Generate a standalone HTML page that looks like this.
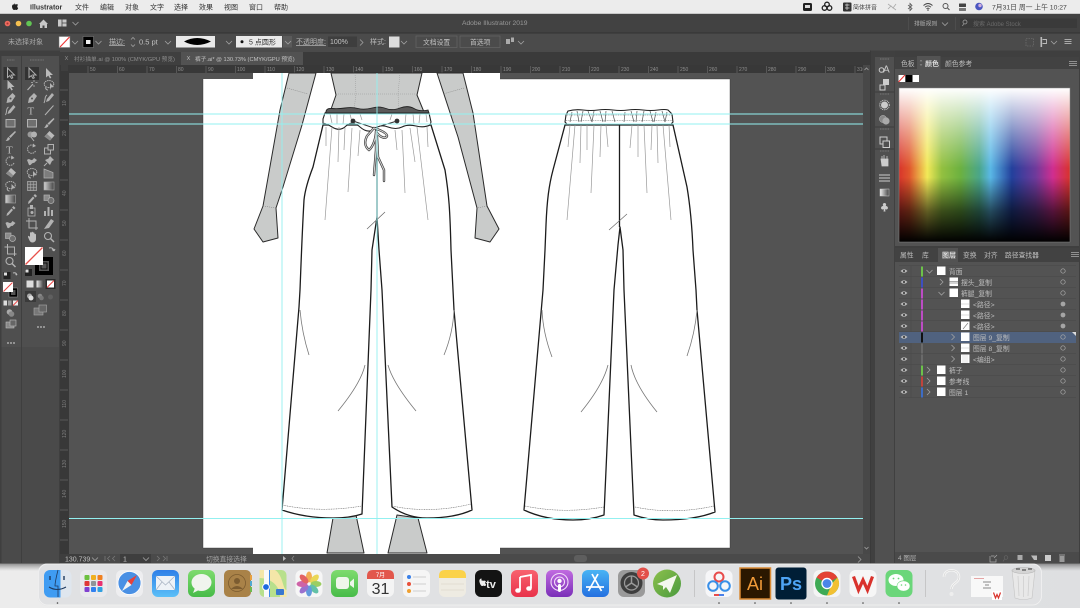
<!DOCTYPE html>
<html lang="zh">
<head>
<meta charset="utf-8">
<title>Adobe Illustrator 2019</title>
<style>
html,body{margin:0;padding:0;width:1080px;height:608px;overflow:hidden;background:#e6e6e8}
svg{display:block;filter:blur(.3px)}
text{font-family:"Liberation Sans","Noto Sans CJK SC",sans-serif}
.m{font-size:7px;fill:#333}
.c{font-size:7px;fill:#b8b8b8}
.s{font-size:5.700px;fill:#aaa}
.r{font-size:5px;fill:#8e8e8e}
.v{font-size:5px;fill:#7e7e7e}
.l{font-size:6.800px;fill:#bdbdbd}
.ic{fill:#c8c8c8;stroke:none}
.ol{fill:none;stroke:#c8c8c8;stroke-width:1}
.chev{fill:none;stroke:#a0a0a0;stroke-width:.8}
.p{fill:#fff;stroke:#1c1c1c;stroke-width:1.300;stroke-linejoin:round}
.g{fill:none;stroke:#999;stroke-width:.7}
.k{fill:none;stroke:#777;stroke-width:.8}
.d{fill:none;stroke:#666;stroke-width:.6;stroke-dasharray:1 .7}
.b{fill:#c9cbca;stroke:#2a2a2a;stroke-width:1;stroke-linejoin:round}
.q{fill:none;stroke:#8a8a8a;stroke-width:.4;stroke-dasharray:1 1}
.gd{stroke:#93f0f0;stroke-width:.9}
</style>
</head>
<body>
<svg width="1080" height="608" viewBox="0 0 1080 608" xmlns="http://www.w3.org/2000/svg">
<defs>
<linearGradient id="hue" x1="0" x2="1" y1="0" y2="0">
<stop offset="0" stop-color="#d8352b"/><stop offset=".06" stop-color="#e0562c"/><stop offset=".165" stop-color="#f2e958"/><stop offset=".25" stop-color="#93c040"/><stop offset=".36" stop-color="#6cb140"/><stop offset=".47" stop-color="#4aa68a"/><stop offset=".535" stop-color="#5ab8e6"/><stop offset=".66" stop-color="#23409c"/><stop offset=".8" stop-color="#6f3a9b"/><stop offset=".9" stop-color="#d02e90"/><stop offset="1" stop-color="#d8332b"/>
</linearGradient>
<linearGradient id="wh" x1="0" x2="0" y1="0" y2="1">
<stop offset="0" stop-color="#fff"/><stop offset=".12" stop-color="#fff" stop-opacity=".75"/><stop offset=".3" stop-color="#fff" stop-opacity=".4"/><stop offset=".52" stop-color="#fff" stop-opacity="0"/>
</linearGradient>
<linearGradient id="bk" x1="0" x2="0" y1="0" y2="1">
<stop offset=".58" stop-color="#000" stop-opacity="0"/><stop offset=".8" stop-color="#000" stop-opacity=".6"/><stop offset="1" stop-color="#000"/>
</linearGradient>
<linearGradient id="gr" x1="0" x2="1"><stop offset="0" stop-color="#eee"/><stop offset="1" stop-color="#444"/></linearGradient>
<linearGradient id="wall" x1="0" x2="1"><stop offset="0" stop-color="#ececec"/><stop offset="1" stop-color="#dedfe1"/></linearGradient>
<linearGradient id="shade" x1="0" x2="0" y1="0" y2="1"><stop offset="0" stop-color="#555" stop-opacity=".7"/><stop offset="1" stop-color="#888" stop-opacity="0"/></linearGradient>
<linearGradient id="fnd" x1="0" x2="1"><stop offset=".6" stop-color="#3f9cf2"/><stop offset=".6" stop-color="#dfe6ee"/></linearGradient>
<linearGradient id="blue" x1="0" x2="0" y1="0" y2="1"><stop offset="0" stop-color="#2f7fe8"/><stop offset="1" stop-color="#5cc0f8"/></linearGradient>
<linearGradient id="grn" x1="0" x2="0" y1="0" y2="1"><stop offset="0" stop-color="#7edb6e"/><stop offset="1" stop-color="#47bb48"/></linearGradient>
<linearGradient id="pod" x1="0" x2="0" y1="0" y2="1"><stop offset="0" stop-color="#c16be0"/><stop offset="1" stop-color="#7a2fb8"/></linearGradient>
<linearGradient id="mus" x1="0" x2="0" y1="0" y2="1"><stop offset="0" stop-color="#f8626e"/><stop offset="1" stop-color="#e8324a"/></linearGradient>
<linearGradient id="stor" x1="0" x2="0" y1="0" y2="1"><stop offset="0" stop-color="#48b4f4"/><stop offset="1" stop-color="#2470e0"/></linearGradient>
<linearGradient id="pg" x1="0" x2="1" y1="0" y2="1"><stop offset="0" stop-color="#8cc04c"/><stop offset="1" stop-color="#4a9a3e"/></linearGradient>

<g id="a"><path d="M3 1V10.500L5.300 8.600 7 11.500 8.300 10.800 6.800 8H10Z" fill="none" stroke="#c8c8c8" stroke-width="1"/></g>
<g id="f"><path d="M3 1V10.500L5.300 8.600 7 11.500 8.300 10.800 6.800 8H10Z" fill="#d2d2d2"/></g>
<g id="pen"><path d="M8 1 11 4 7 10 2 11 3 6Z" fill="#c8c8c8"/><circle cx="6" cy="6.500" r="1" fill="#555"/></g>
<g id="curv"><path d="M9 1 11 3 6 9 3 10 4 7Z" fill="#c8c8c8"/><path d="M1 11C3 7 1 5 4 3" fill="none" stroke="#c8c8c8"/></g>
<g id="rect"><rect x="1.500" y="2.500" width="9" height="7.500" fill="#777" stroke="#c8c8c8"/></g>
<g id="brush"><path d="M10.500 1 11.500 2 6 8 4.500 6.500Z" fill="#c8c8c8"/><path d="M4 7 5.500 8.500C5 10.500 3 11 1 11 2.500 10 2.500 8 4 7Z" fill="#c8c8c8"/></g>
<g id="rot"><path d="M9.500 8A4.200 4.200 0 1 1 8 2.600" fill="none" stroke="#c8c8c8" stroke-dasharray="1.500 .8"/><path d="M7 .5 10 3 6.500 4.500Z" fill="#c8c8c8"/></g>
<g id="era"><path d="M6.500 1 11.500 5.500 7 10.500 1.500 6.500Z" fill="#d2d2d2"/><path d="M1.500 6.500 4 4 9 8.500 7 10.500Z" fill="#999"/></g>
<g id="las"><ellipse cx="6" cy="5" rx="4.800" ry="3.500" fill="none" stroke="#c8c8c8" stroke-dasharray="1.500 .7"/><path d="M3 8C2 10 4 11 5 11" fill="none" stroke="#c8c8c8"/><path d="M7 4 11 8 8 8.500 7 11Z" fill="#c8c8c8"/></g>
<g id="grad"><rect x="1" y="2" width="10" height="8" fill="url(#gr)" stroke="#bbb" stroke-width=".6"/></g>
<g id="eye"><path d="M9 1 11 3 9.500 4.500 7.500 2.500Z M7 3.500 8.500 5 4 10 2 11 2.500 8.500Z" fill="#c8c8c8"/></g>
<g id="bln"><rect x="1" y="2" width="5.500" height="5.500" fill="#999" stroke="#c8c8c8" stroke-width=".7"/><circle cx="8" cy="7.500" r="3" fill="#777" stroke="#c8c8c8" stroke-width=".7"/></g>
<g id="bld"><circle cx="4.500" cy="4.500" r="3" fill="#aaa"/><circle cx="8" cy="4.500" r="3" fill="#c8c8c8"/><path d="M5 7 8 11" stroke="#c8c8c8"/></g>
<g id="art"><rect x="3" y="3" width="7" height="7" fill="none" stroke="#c8c8c8"/><path d="M0 3H3M3 0V3M10 10H12M10 10V12" stroke="#c8c8c8"/></g>
<g id="zm"><circle cx="5" cy="5" r="3.500" fill="none" stroke="#c8c8c8" stroke-width="1.100"/><path d="M7.500 7.500 11 11" stroke="#c8c8c8" stroke-width="1.500"/></g>
<g id="wand"><path d="M1.500 11 7 5" stroke="#c8c8c8" stroke-width="1.200"/><path d="M8 1V3M8 6V8M5 3.500H7M9.500 3.500H11.500" stroke="#c8c8c8" stroke-width=".8"/></g>
<g id="line"><path d="M2 11 10.500 1.500" stroke="#c8c8c8"/></g>
<g id="warp"><path d="M1 5C4 2 5 8 8 3L11 5 8 8C6 7 5 11 3 10Z" fill="#c8c8c8"/></g>
<g id="pin"><path d="M7 1 11 5 9 6 7 10 2 5 5.500 3.500Z" fill="#c8c8c8"/><path d="M4 8 1 11" stroke="#c8c8c8"/></g>
<g id="scl"><rect x="1.500" y="5" width="6" height="6" fill="none" stroke="#c8c8c8"/><rect x="5" y="1.500" width="5.500" height="5.500" fill="#555" stroke="#c8c8c8"/></g>
<g id="per"><path d="M1 2 10 5.500V11H1Z" fill="#888" stroke="#c8c8c8" stroke-width=".7"/></g>
<g id="msh"><rect x="1.500" y="1.500" width="9" height="9" fill="#6a6a6a" stroke="#c8c8c8" stroke-width=".7"/><path d="M4.500 1.500V10.500M7.500 1.500V10.500M1.500 4.500H10.500M1.500 7.500H10.500" stroke="#c8c8c8" stroke-width=".5"/></g>
<g id="sym"><rect x="2" y="3" width="7" height="8" fill="none" stroke="#c8c8c8" stroke-width=".8"/><path d="M4 0 7 0 7 4 4 4Z" fill="#c8c8c8"/><circle cx="6" cy="7.500" r="1.500" fill="#c8c8c8"/></g>
<g id="gph"><path d="M1 11V6H3V11ZM4.500 11V2H6.500V11ZM8 11V5H10V11Z" fill="#c8c8c8"/></g>
<g id="slc"><path d="M8 1 11 3 6 10 1 11 3 8Z" fill="#c8c8c8"/></g>
<g id="hand"><path d="M2 6C2 4 3.500 5 4 6V2C4 1 5.500 1 5.500 2V1.500C5.500 .5 7 .5 7 1.500V2C7 1 8.500 1.200 8.500 2.200V3.500C8.500 2.500 10 2.700 10 3.700V8C10 10 8.500 11.500 6.500 11.500 4 11.500 3.500 9.500 2 6Z" fill="#d8d8d8"/></g>
<g id="eyeic"><path d="M0 3Q3.500 -.5 7 3 3.500 6.500 0 3Z" fill="#bdbdbd"/><circle cx="3.500" cy="3" r="1.100" fill="#444"/></g>
<g id="tg"><circle cx="2.500" cy="2.500" r="2.200" fill="none" stroke="#aaa" stroke-width=".7"/></g>
<g id="tgf"><circle cx="2.500" cy="2.500" r="2.400" fill="#a5a5a5"/></g>
<g id="dwn"><path d="M0 0 3 3 6 0" class="chev"/></g>
<g id="rgt"><path d="M0 0 3 3 0 6" class="chev"/></g>
<g id="th"><rect x="0" y="0" width="8.500" height="8.500" fill="#fff"/></g>
</defs>

<!-- desktop -->
<rect width="1080" height="608" fill="url(#wall)"/>
<rect y="0" width="1080" height="14" fill="#ececec"/>
<rect y="563" width="1080" height="8" fill="url(#shade)"/>

<!-- menu bar -->
<path d="M15 3.200C14.300 3.600 14.200 4.200 14.300 4.500 13 4 12 5 12 6.500 12 8 13 10 14 10 14.500 10 14.800 9.700 15.200 9.700 15.700 9.700 16 10 16.500 10 17.300 10 18 8.700 18.200 8 17 7.500 17 5.500 18.100 5 17.500 4.200 16.500 4.100 15.500 4.500 15 4.500 15 3.800 15 3.200Z" fill="#222"/>
<text x="30" y="9.500" style="font-size:7px;font-weight:bold;fill:#333">Illustrator</text>
<text x="75" y="9.500" class="m">文件</text><text x="100" y="9.500" class="m">编辑</text><text x="125" y="9.500" class="m">对象</text><text x="150" y="9.500" class="m">文字</text><text x="174" y="9.500" class="m">选择</text><text x="199" y="9.500" class="m">效果</text><text x="224" y="9.500" class="m">视图</text><text x="249" y="9.500" class="m">窗口</text><text x="274" y="9.500" class="m">帮助</text>
<rect x="803" y="3" width="9" height="8" rx="1.500" fill="#222"/><rect x="805" y="5" width="5" height="3" fill="#ddd"/>
<circle cx="827" cy="4.500" r="2.300" fill="none" stroke="#222" stroke-width="1.300"/><circle cx="824.500" cy="8" r="2.300" fill="none" stroke="#222" stroke-width="1.300"/><circle cx="829.500" cy="8" r="2.300" fill="none" stroke="#222" stroke-width="1.300"/>
<rect x="843" y="2.500" width="8.500" height="9" rx="1" fill="#333"/><path d="M845 5H849.500M845 8H849.500M847 3.500V10" stroke="#ddd" stroke-width=".7"/>
<text x="853" y="9.500" style="font-size:6px;fill:#444">简体拼音</text>
<path d="M888 4 896 10M888 9 891 6 893 8 896 4" fill="none" stroke="#aaa" stroke-width=".8"/>
<path d="M910 3V11M908 5 912 8.500 910 10.500V3.500L912 5.500 908 9" fill="none" stroke="#555" stroke-width=".8"/>
<path d="M923.500 5.500Q928 1.500 932.500 5.500M925 7.200Q928 4.500 931 7.200M926.500 8.800Q928 7.500 929.500 8.800" fill="none" stroke="#444" stroke-width=".9"/><circle cx="928" cy="10" r=".8" fill="#444"/>
<circle cx="945.500" cy="6" r="2.500" fill="none" stroke="#555" stroke-width="1"/><path d="M947.500 8 949.500 10" stroke="#555" stroke-width="1.100"/>
<rect x="959" y="3.500" width="7" height="3.500" rx=".5" fill="#444"/><rect x="959" y="8" width="7" height="3" rx=".5" fill="#777"/>
<circle cx="979" cy="6.500" r="3.800" fill="#4a56c0"/><circle cx="980" cy="5.500" r="1.700" fill="#d0b0e0"/>
<text x="992" y="9.500" style="font-size:6.800px;fill:#444">7月31日 周一 上午 10:27</text>

<!-- title bar -->
<rect y="13" width="1080" height="1" fill="#c8c8c8"/>
<rect y="14" width="1080" height="18.500" fill="#424242"/>
<circle cx="7.500" cy="23.500" r="2.800" fill="#ec6b5e"/><circle cx="7.500" cy="23.500" r="1" fill="#a33"/>
<circle cx="18.500" cy="23.500" r="2.800" fill="#f4bf4f"/><circle cx="29" cy="23.500" r="2.800" fill="#62c554"/>
<path d="M39 24 43.500 19.500 48 24H47V28H44.500V25.500H42.500V28H40V24Z" fill="#c8c8c8"/>
<rect x="58" y="19.500" width="8.500" height="7" fill="#c8c8c8"/><path d="M62 19.500V26.500M62 23H66.500" stroke="#424242" stroke-width=".8"/>
<use href="#dwn" x="72.500" y="22"/>
<text x="462" y="25" style="font-size:6.700px;fill:#999">Adobe Illustrator 2019</text>
<rect x="908" y="17" width=".6" height="13" fill="#555"/>
<text x="914" y="25.500" style="font-size:5.800px;fill:#b0b0b0">排版规则</text>
<use href="#dwn" x="942" y="22.500"/>
<rect x="955" y="17" width=".6" height="13" fill="#555"/>
<rect x="960" y="18.500" width="117" height="9.500" fill="#3a3a3a"/>
<circle cx="965" cy="22" r="2" fill="none" stroke="#aaa" stroke-width=".7"/><path d="M963.500 24 962.500 26" stroke="#aaa" stroke-width=".7"/>
<text x="973" y="26" style="font-size:6px;fill:#6a6a6a">搜索 Adobe Stock</text>

<!-- control bar -->
<rect y="32.500" width="1080" height="1" fill="#333"/>
<rect y="33.500" width="1080" height="17" fill="#4b4b4b"/>
<text x="8" y="44" class="c" style="fill:#a8a8a8">未选择对象</text>
<rect x="59" y="36.500" width="11" height="11" fill="#fff" stroke="#777" stroke-width=".5"/><path d="M60 47 69.500 37" stroke="#e33" stroke-width="1.100"/>
<use href="#dwn" x="72" y="41"/>
<rect x="83" y="36.500" width="10.500" height="11" fill="#000" stroke="#888" stroke-width=".5"/><rect x="86" y="40" width="4.500" height="4" fill="#eee"/>
<use href="#dwn" x="95.500" y="41"/>
<text x="109" y="44" class="c" style="text-decoration:underline">描边:</text>
<path d="M131 39.500 133 37.500 135 39.500M131 44.500 133 46.500 135 44.500" class="chev"/>
<text x="139" y="44.500" style="font-size:7.500px;fill:#c0c0c0">0.5 pt</text>
<use href="#dwn" x="165" y="41"/>
<rect x="176" y="36" width="39" height="11.500" fill="#e9e9e9"/><path d="M184 41.500Q197 34.500 211 41.500 197 48.500 184 41.500Z" fill="#000"/>
<use href="#dwn" x="226" y="41"/>
<rect x="236" y="36" width="46" height="11.500" fill="#e9e9e9"/><circle cx="242" cy="41.800" r="1.500" fill="#111"/>
<text x="249" y="44.500" style="font-size:7px;fill:#333">5 点圆形</text>
<rect x="283" y="36" width="9" height="11.500" fill="#5a5a5a"/><use href="#dwn" x="285" y="41"/>
<text x="296" y="44" class="c" style="text-decoration:underline">不透明度:</text>
<rect x="328" y="36.500" width="29" height="10.500" fill="#3e3e3e"/>
<text x="330" y="44" style="font-size:7px;fill:#c4c4c4">100%</text>
<use href="#rgt" x="360" y="39.500"/>
<text x="370" y="44" class="c">样式:</text>
<rect x="389" y="36.500" width="10.500" height="11" fill="#dcdcdc"/>
<use href="#dwn" x="401" y="41"/>
<rect x="416" y="36" width="41" height="11.500" fill="#4b4b4b" stroke="#666" stroke-width=".7"/>
<text x="423" y="44.500" style="font-size:6.800px;fill:#c0c0c0">文档设置</text>
<rect x="460" y="36" width="40" height="11.500" fill="#4b4b4b" stroke="#666" stroke-width=".7"/>
<text x="470" y="44.500" style="font-size:6.800px;fill:#c0c0c0">首选项</text>
<path d="M506 39H510V44H506ZM511 37.500H514V42H511Z" fill="#aaa"/><use href="#dwn" x="518" y="41"/>
<path d="M1026 38.500H1033.500V46H1026Z" fill="none" stroke="#777" stroke-width=".6" stroke-dasharray="1.500 1"/>
<rect x="1040.500" y="37" width="1.600" height="10" fill="#bbb"/><path d="M1042.500 39.500H1046.500V43.500H1042.500" fill="none" stroke="#bbb" stroke-width=".9"/><use href="#dwn" x="1051" y="41"/>
<path d="M1064.500 39.500H1071.500M1064.500 41.500H1071.500M1064.500 43.500H1071.500" stroke="#aaa" stroke-width=".9"/>

<!-- work area background -->
<rect y="50.500" width="1080" height="513" fill="#4a4a4a"/>
<rect x="60" y="52" width="243" height="13" fill="#3f3f3f"/>
<rect x="303" y="52" width="570" height="13" fill="#3a3a3a"/>
<rect x="181" y="52" width="122" height="13" fill="#525252"/>
<path d="M65 56 68 60M68 56 65 60" stroke="#999" stroke-width=".5"/>
<text x="74" y="61" class="s" style="fill:#8f8f8f">衬衫描单.ai @ 100% (CMYK/GPU 预览)</text>
<path d="M187 56 190 60M190 56 187 60" stroke="#ccc" stroke-width=".5"/>
<text x="195" y="61" class="s" style="fill:#c4c4c4">裤子.ai* @ 130.73% (CMYK/GPU 预览)</text>

<!-- canvas -->
<rect x="69" y="73" width="794" height="481" fill="#535353"/>
<rect x="253" y="73" width="247" height="481" fill="#fff"/>
<rect x="203" y="79" width="527" height="469" fill="#fff"/>
<path d="M203 79V548H253M500 548H730V79H500" fill="none" stroke="#333" stroke-width=".4"/>

<!-- ruler -->
<rect x="60" y="65" width="803" height="8" fill="#383838"/>
<rect x="60" y="65" width="9" height="489" fill="#383838"/>
<path d="M61 66H68M61 68H68M61 70H68" stroke="#555" stroke-width=".6"/>
<g stroke="#777" stroke-width=".5">
<path d="M88 66V73M117.500 66V73M147 66V73M176.500 66V73M206 66V73M235.500 66V73M265 66V73M294.500 66V73M324 66V73M353.500 66V73M383 66V73M412.500 66V73M442 66V73M471.500 66V73M501 66V73M530.500 66V73M560 66V73M589.500 66V73M619 66V73M648.500 66V73M678 66V73M707.500 66V73M737 66V73M766.500 66V73M796 66V73M825.500 66V73M855 66V73"/>
<path d="M68 90H60M68 120H60M68 150H60M68 180H60M68 210H60M68 240H60M68 270H60M68 300H60M68 330H60M68 360H60M68 390H60M68 420H60M68 450H60M68 480H60M68 510H60M68 540H60"/>
</g>
<g>
<text x="90" y="71" class="r">50</text><text x="119" y="71" class="r">60</text><text x="149" y="71" class="r">70</text><text x="178" y="71" class="r">80</text><text x="208" y="71" class="r">90</text><text x="237" y="71" class="r">100</text><text x="267" y="71" class="r">110</text><text x="296" y="71" class="r">120</text><text x="326" y="71" class="r">130</text><text x="355" y="71" class="r">140</text><text x="385" y="71" class="r">150</text><text x="414" y="71" class="r">160</text><text x="444" y="71" class="r">170</text><text x="473" y="71" class="r">180</text><text x="503" y="71" class="r">190</text><text x="532" y="71" class="r">200</text><text x="562" y="71" class="r">210</text><text x="591" y="71" class="r">220</text><text x="621" y="71" class="r">230</text><text x="650" y="71" class="r">240</text><text x="680" y="71" class="r">250</text><text x="709" y="71" class="r">260</text><text x="739" y="71" class="r">270</text><text x="768" y="71" class="r">280</text><text x="798" y="71" class="r">290</text><text x="827" y="71" class="r">300</text><text x="857" y="71" class="r">310</text>
</g>
<g>
<text transform="translate(66 106) rotate(-90)" class="v">10</text><text transform="translate(66 136) rotate(-90)" class="v">20</text><text transform="translate(66 166) rotate(-90)" class="v">30</text><text transform="translate(66 196) rotate(-90)" class="v">40</text><text transform="translate(66 226) rotate(-90)" class="v">50</text><text transform="translate(66 256) rotate(-90)" class="v">60</text><text transform="translate(66 286) rotate(-90)" class="v">70</text><text transform="translate(66 316) rotate(-90)" class="v">80</text><text transform="translate(66 346) rotate(-90)" class="v">90</text><text transform="translate(66 378) rotate(-90)" class="v">100</text><text transform="translate(66 408) rotate(-90)" class="v">110</text><text transform="translate(66 438) rotate(-90)" class="v">120</text><text transform="translate(66 468) rotate(-90)" class="v">130</text><text transform="translate(66 498) rotate(-90)" class="v">140</text><text transform="translate(66 528) rotate(-90)" class="v">150</text>
</g>

<!-- body -->
<path class="b" d="M289 73 280 110 263 206 254 229 263 242 278 238 276 208 283 187 302 125 316 73Z"/>
<path class="b" d="M437 73 458 137 477 208 475 238 490 242 499 229 487 206 473 113 463 73Z"/>
<path class="k" d="M287 88 308 94M263 206 276 208M464 88 443 94M487 206 477 208" style="stroke-dasharray:1 1;stroke-width:.5"/>
<path class="b" d="M331 73 336 95 330 112H424L417 95 422 73Z"/>
<path class="q" d="M336 94H417M355 73 356 94 354 110M400 73 398 94 399 110"/>
<path class="b" d="M333 518 327 553H364L356 515Z"/>
<path class="b" d="M397 515 388 553H427L418 518Z"/>

<!-- front pants -->
<path class="p" d="M323 125 313 167C308 180 305 190 304 200 302 235 301 265 300 290L299 307 282 510Q305 518 333 518 350 518 362 514L371 290 372 250 377 217 379 250 382 290 392 507Q408 518 427 518 455 518 472 510L454 310 453 290 451 250C450 210 449 195 445 170L431 125Z"/>
<path d="M377 125V217" stroke="#1c1c1c" stroke-width="1.300"/>
<path d="M326 112Q326 108 332 108.500T345 108T358 108.500T372 108T386 108.500T400 108T414 108.500T428 110L429 113H325Z" fill="#5a5a5a" stroke="#222" stroke-width=".9"/>
<path d="M325 113H429L431 122 430 125Q424 128 416 126T402 127T388 127T374 129T360 127T346 126T332 127T323 124L323 119Z" fill="#fff" stroke="#222" stroke-width="1.100"/>
<path class="g" d="M330 114 332 123M337 114V124M344 114 343 124M350 114 352 122M406 114 405 124M413 114 414 124M420 114 419 123M426 114 427 122M360 114 362 120M392 114 390 120"/>
<path class="g" d="M326 127V146M332 127 325 220M339 127 338 162M345 128 344 150M352 128 348 192M360 130 358 156M395 130 397 150M402 130 405 193M410 128 415 162M417 127 428 220M427 127 428 147"/>
<path class="g" style="stroke:#666" d="M367 229 385 212"/>
<circle cx="353" cy="121" r="2.400" fill="#333"/><circle cx="397" cy="121" r="2.400" fill="#333"/>
<path d="M353 121 374 128 397 121" fill="none" stroke="#333" stroke-width="1"/>
<g fill="none" stroke-linecap="round" stroke-linejoin="round">
<path d="M374 128 367 136C364 142 365 147 369 150 373 147 376 138 376 131M374 128C380 130 387 133 387 136 386 139 381 138 377 133M376 131V150L374 175M377 137 378 157 384 170V181" stroke="#333" stroke-width="2.400"/>
<path d="M374 128 367 136C364 142 365 147 369 150 373 147 376 138 376 131M374 128C380 130 387 133 387 136 386 139 381 138 377 133M376 131V150L374 175M377 137 378 157 384 170V181" stroke="#cfcfcf" stroke-width="1.100"/>
</g>
<path class="k" d="M300 310Q302 333 309 355M365 365Q361 383 338 411M388 365Q393 383 416 411M454 310Q453 333 444 355"/>
<path class="d" d="M282 505Q320 513 362 506M392 506Q430 514 471 504"/>

<!-- back pants -->
<path class="p" d="M565 125 553 170C549 185 547 200 546 225L545 250 543 290 524 510Q545 520 573 520 590 520 604 515L614 290 618 245 620 227 623 250 624 290 634 515Q648 520 663 520 695 520 715 512L697 310 696 290 693 250C692 225 690 205 687 187L673 125Z"/>
<path d="M619.500 125V227" stroke="#1c1c1c" stroke-width="1.300"/>
<path d="M568 111Q575 109 583 110T598 110T613 110T628 110T643 110T658 110T668 110L672 114 673 122 671 124Q650 125 619 124.500 590 125 567 124L565 122 566 115Z" fill="#fff" stroke="#222" stroke-width="1.100"/>
<path class="g" style="stroke:#555" d="M572 112 570 122M577 111 579 122M583 111 581 122M588 111 592 122M594 111 592 122M600 111 603 122M606 111 605 122M612 111 615 122M625 112 624 122M631 111 634 122M637 111 636 122M644 111 642 122M650 111 653 122M656 112 654 122M662 111 665 122M667 112 665 122"/>
<path class="d" d="M567 115H672M566 120.500H673"/>
<path class="g" d="M570 125 568 147M575 125 567 220M581 125 580 163M587 125 587 150M594 125 591 193M601 125 600 157M606 125 608 147M632 125 630 148M638 125 638 157M644 125 647 193M652 125 651 150M657 125 658 163M663 125 671 220M669 125 670 147"/>
<path class="g" style="stroke:#666" d="M609 230 627 214"/>
<path class="k" d="M542 310Q543 333 552 357M608 365Q603 385 581 412M631 365Q635 385 657 412M697 310Q695 333 687 356"/>
<path class="d" d="M525 506Q563 514 604 507M635 507Q673 515 714 506"/>

<!-- guides -->
<path class="gd" d="M69 114H863M69 124H863M69 518.500H863M282 73V554M377 73V554"/>

<!-- scrollbars -->
<rect x="863" y="65" width="7" height="489" fill="#484848"/>
<path d="M864.500 70 866.500 68 868.500 70" class="chev"/>
<path d="M864.500 547 866.500 549 868.500 547" class="chev"/>
<rect x="60" y="554" width="813" height="9" fill="#4a4a4a"/>
<rect x="574" y="555" width="13" height="7" rx="3" fill="#5e5e5e"/>
<use href="#rgt" x="858" y="556.500"/>
<rect x="60" y="554" width="30" height="9" fill="#3e3e3e"/>
<text x="65" y="561.500" style="font-size:7px;fill:#c0c0c0">130.739</text>
<use href="#dwn" x="92" y="557.500"/>
<path d="M105 556V561M110 556 107.500 558.500 110 561M115 556 112.500 558.500 115 561" class="chev" style="stroke:#777"/>
<rect x="120" y="554" width="31" height="9" fill="#3e3e3e"/>
<text x="123" y="561.500" style="font-size:7px;fill:#c0c0c0">1</text>
<use href="#dwn" x="143" y="557.500"/>
<path d="M157 556 159.500 558.500 157 561M163 556 165.500 558.500 163 561M167 556V561" class="chev" style="stroke:#777"/>
<text x="206" y="561.500" style="font-size:6.800px;fill:#a0a0a0">切换直接选择</text>
<path d="M283 556 286 558.500 283 561Z" fill="#bbb"/>
<path d="M294 556 292 558.500 294 561" class="chev" style="stroke:#888"/>

<!-- toolbars -->
<rect x="0" y="50.500" width="60" height="513" fill="#3f3f3f"/>
<rect x="1.500" y="56" width="19.500" height="291" fill="#4f4f4f"/>
<rect x="22" y="56" width="37" height="291" fill="#4f4f4f"/>
<rect x="1.500" y="347" width="19.500" height="216" fill="#4a4a4a"/>
<rect x="22" y="347" width="37" height="216" fill="#4a4a4a"/>
<path d="M7 60H15M30 60H44" stroke="#777" stroke-width="1" stroke-dasharray="1 .6"/>
<rect x="3.500" y="67" width="14" height="13" fill="#333"/>
<rect x="25" y="67" width="14" height="13" fill="#333"/>
<g opacity=".82">
<use href="#a" x="4.500" y="67"/><use href="#f" x="4.500" y="79"/><use href="#pen" x="4.500" y="92"/><use href="#curv" x="4.500" y="104"/><use href="#rect" x="4.500" y="117"/><use href="#brush" x="4.500" y="130"/>
<text x="6" y="153.500" style="font-family:'Liberation Serif',serif;font-size:11px;fill:#ccc">T</text>
<use href="#rot" x="4.500" y="155"/><use href="#era" x="4.500" y="167"/><use href="#las" x="4.500" y="180"/><use href="#grad" x="4.500" y="193"/><use href="#eye" x="4.500" y="205"/><use href="#warp" x="4.500" y="218"/><use href="#bln" x="4.500" y="231"/><use href="#art" x="4.500" y="244"/><use href="#zm" x="4.500" y="256"/>

<use href="#a" x="26" y="67"/><use href="#f" x="43" y="67"/>
<use href="#wand" x="26" y="79"/><use href="#las" x="43" y="79"/>
<use href="#pen" x="26" y="92"/><use href="#curv" x="43" y="92"/>
<text x="27.500" y="114.500" style="font-family:'Liberation Serif',serif;font-size:11px;fill:#ccc">T</text><use href="#line" x="43" y="104"/>
<use href="#rect" x="26" y="117"/><use href="#brush" x="43" y="117"/>
<use href="#bld" x="26" y="130"/><use href="#era" x="43" y="130"/>
<use href="#rot" x="26" y="143"/><use href="#scl" x="43" y="143"/>
<use href="#warp" x="26" y="155"/><use href="#pin" x="43" y="155"/>
<use href="#las" x="26" y="167"/><use href="#per" x="43" y="167"/>
<use href="#msh" x="26" y="180"/><use href="#grad" x="43" y="180"/>
<use href="#eye" x="26" y="193"/><use href="#bln" x="43" y="193"/>
<use href="#sym" x="26" y="205"/><use href="#gph" x="43" y="205"/>
<use href="#art" x="26" y="218"/><use href="#slc" x="43" y="218"/>
<use href="#hand" x="26" y="231"/><use href="#zm" x="43" y="231"/>
</g>

<!-- left small fill/stroke -->
<rect x="3.500" y="272" width="7" height="7" fill="#222"/><rect x="4" y="272.500" width="3" height="3" fill="#ddd"/>
<path d="M13 273Q16 272 17 275M17 275 15.500 274.500" fill="none" stroke="#bbb"/>
<rect x="9" y="288" width="8.500" height="9" fill="#000" stroke="#999" stroke-width=".5"/><rect x="11" y="290" width="4.500" height="5" fill="#555"/>
<rect x="3" y="282" width="10" height="10" fill="#fff"/><path d="M3.500 291.500 12.500 282.500" stroke="#e44" stroke-width="1"/>
<rect x="3.500" y="300.500" width="3.500" height="5" fill="#ddd"/><rect x="8" y="300.500" width="3.500" height="5" fill="#999"/>
<rect x="13" y="300.500" width="5" height="5" fill="#eee"/><path d="M13 305.500 18 300.500" stroke="#e44" stroke-width=".9"/>
<circle cx="9.500" cy="312" r="2.800" fill="#aaa"/><circle cx="11.500" cy="314" r="2.800" fill="#888"/>
<rect x="6" y="322" width="8" height="6" fill="#888" stroke="#bbb" stroke-width=".6"/><rect x="10" y="320" width="6" height="6" fill="#666" stroke="#bbb" stroke-width=".6"/>
<path d="M7 343H9M10 343H12M13 343H15" stroke="#bbb" stroke-width="1.200"/>

<!-- big fill/stroke -->
<rect x="35" y="257" width="18" height="18" fill="#000"/><rect x="39" y="261" width="10" height="10" fill="#555"/><rect x="41" y="263" width="6" height="6" fill="none" stroke="#000" stroke-width=".8"/>
<rect x="25" y="247" width="18" height="18" fill="#fff"/><path d="M25.500 264.500 42.500 247.500" stroke="#e8504a" stroke-width="1.300"/>
<path d="M49 248Q53 247 54 251M54 251 52 249.500M54 251 55 249" fill="none" stroke="#bbb"/>
<rect x="25" y="269" width="7" height="7" fill="#222"/><rect x="25.500" y="269.500" width="3" height="3" fill="#ddd"/>
<rect x="26.500" y="280.500" width="7" height="7" fill="#ddd"/>
<rect x="36.500" y="280.500" width="7" height="7" fill="url(#gr)"/>
<rect x="45.500" y="279" width="10" height="10" fill="#2a2a2a"/><rect x="47" y="280.500" width="7" height="7" fill="#fff"/><path d="M47 287.500 54 280.500" stroke="#e44"/>
<rect x="25" y="291" width="11" height="11" fill="#3a3a3a"/><circle cx="29.500" cy="296" r="2.500" fill="#aaa"/><circle cx="31" cy="298" r="2.500" fill="#ddd"/>
<circle cx="40" cy="296" r="2.300" fill="#888"/><circle cx="41.500" cy="298" r="2.300" fill="#777"/>
<circle cx="50.500" cy="297" r="2.500" fill="#5f5f5f"/>
<rect x="34" y="308" width="9" height="7" fill="#777" stroke="#aaa" stroke-width=".6"/><rect x="39" y="305" width="7.500" height="7" fill="#666" stroke="#aaa" stroke-width=".6"/>
<path d="M37 327H39M40 327H42M43 327H45" stroke="#bbb" stroke-width="1.200"/>

<!-- right icon dock -->
<rect x="870" y="50.500" width="25" height="513" fill="#404040"/>
<rect x="875" y="57" width="19" height="506" fill="#505050"/>
<path d="M875 92H894M875 127H894M875 149H894" stroke="#3c3c3c"/>
<path d="M880 59H889M880 94H889M880 129H889M880 151H889" stroke="#777" stroke-dasharray="1 .6"/>
<text x="883" y="72.500" style="font-size:10px;fill:#ccc">A</text><circle cx="881.500" cy="70" r="2.300" fill="none" stroke="#ccc"/>
<rect x="880" y="85" width="5" height="5" fill="none" stroke="#ccc"/><rect x="883" y="79" width="6" height="6" fill="#ccc"/>
<circle cx="884.500" cy="105" r="3.500" fill="#ccc"/><circle cx="884.500" cy="105" r="4.800" fill="none" stroke="#ccc" stroke-dasharray="1 .8"/>
<circle cx="883" cy="119" r="3.600" fill="#888" stroke="#bbb" stroke-width=".5"/><circle cx="886" cy="121" r="3.600" fill="#aaa"/>
<rect x="880" y="137" width="7" height="7" fill="none" stroke="#ccc"/><rect x="883" y="141" width="6.500" height="6.500" fill="#505050" stroke="#ccc"/>
<path d="M881 159H888V166H882ZM884 155V159M882 156V159M887 156V159" fill="#ccc" stroke="#ccc" stroke-width=".8"/>
<path d="M879 175H890M879 178H890M879 181H890" stroke="#ccc" stroke-width="1"/>
<rect x="880" y="189" width="9" height="7" fill="url(#gr)" stroke="#ccc" stroke-width=".5"/>
<path d="M884.500 203C882.500 203 882.500 205.500 883.500 206 881 205.500 880 209 882.500 209.500 883.500 209.700 884 209 884 209L883.500 211.500H885.500L885 209C885 209 885.500 209.700 886.500 209.500 889 209 888 205.500 885.500 206 886.500 205.500 886.500 203 884.500 203Z" fill="#ccc"/>

<!-- right panels -->
<rect x="895" y="50.500" width="185" height="513" fill="#3f3f3f"/>
<rect x="895" y="57" width="184" height="189" fill="#535353"/>
<rect x="895" y="57" width="184" height="12" fill="#424242"/>
<rect x="917" y="56" width="23.500" height="13" fill="#535353"/>
<text x="901" y="66" class="l">色板</text>
<text x="925" y="66" style="font-size:7px;fill:#dcdcdc;font-weight:bold">颜色</text>
<path d="M920 61.500 921 60 922 61.500M920 64 921 65.500 922 64" fill="none" stroke="#aaa" stroke-width=".5"/>
<text x="945" y="66" class="l">颜色参考</text>
<path d="M1069 61.500H1077M1069 63.500H1077M1069 65.500H1077" stroke="#aaa" stroke-width=".8"/>
<rect x="898.500" y="75" width="6.500" height="7" fill="#fff"/><path d="M898.500 82 905 75" stroke="#e33" stroke-width="1"/>
<rect x="906" y="75" width="6.500" height="7" fill="#000"/>
<rect x="912.500" y="75" width="6.500" height="7" fill="#fff"/>
<rect x="899" y="88" width="171" height="154" fill="url(#hue)"/>
<rect x="899" y="88" width="171" height="154" fill="url(#wh)"/>
<rect x="899" y="88" width="171" height="154" fill="url(#bk)"/>
<rect x="899" y="88" width="171" height="154" fill="none" stroke="#888" stroke-width=".5"/>

<rect x="895" y="248" width="184" height="315" fill="#535353"/>
<rect x="895" y="248" width="184" height="14" fill="#424242"/>
<rect x="938" y="248" width="20" height="14" fill="#535353"/>
<text x="900" y="257.500" class="l">属性</text><text x="922" y="257.500" class="l">库</text>
<text x="942" y="257.500" style="font-size:7px;fill:#dcdcdc;font-weight:bold">图层</text>
<text x="963" y="257.500" class="l">变换</text><text x="984" y="257.500" class="l">对齐</text><text x="1005" y="257.500" class="l">路径查找器</text>
<path d="M1071 252.500H1079M1071 254.500H1079M1071 256.500H1079" stroke="#aaa" stroke-width=".8"/>
<path d="M899 265.500H1076M899 276.500H1076M899 287.500H1076M899 298.500H1076M899 309.500H1076M899 320.500H1076M899 331.500H1076M899 342.500H1076M899 353.500H1076M899 364.500H1076M899 375.500H1076M899 386.500H1076M899 397.500H1076" stroke="#484848" stroke-width=".5"/>
<path d="M911 266V398" stroke="#484848" stroke-width=".5"/>
<rect x="899" y="332" width="177" height="11" fill="#50627f"/>
<path d="M1072 332H1076V336Z" fill="#ddd"/>

<rect x="921" y="266.500" width="2" height="10" fill="#6cc24a"/>
<rect x="921" y="277.500" width="2" height="10" fill="#3d4fc0"/>
<rect x="921" y="288.500" width="2" height="10" fill="#bc4cc4"/>
<rect x="921" y="299.500" width="2" height="10" fill="#bc4cc4"/>
<rect x="921" y="310.500" width="2" height="10" fill="#bc4cc4"/>
<rect x="921" y="321.500" width="2" height="10" fill="#bc4cc4"/>
<rect x="921" y="332.500" width="2" height="10" fill="#111"/>
<rect x="921" y="343.500" width="2" height="10" fill="#6a6a6a"/>
<rect x="921" y="354.500" width="2" height="10" fill="#6a6a6a"/>
<rect x="921" y="365.500" width="2" height="10" fill="#6cc24a"/>
<rect x="921" y="376.500" width="2" height="10" fill="#c0443c"/>
<rect x="921" y="387.500" width="2" height="10" fill="#3d6cc4"/>

<use href="#eyeic" x="900.500" y="268"/><use href="#eyeic" x="900.500" y="279"/><use href="#eyeic" x="900.500" y="290"/><use href="#eyeic" x="900.500" y="301"/><use href="#eyeic" x="900.500" y="312"/><use href="#eyeic" x="900.500" y="323"/><use href="#eyeic" x="900.500" y="334"/><use href="#eyeic" x="900.500" y="345"/><use href="#eyeic" x="900.500" y="356"/><use href="#eyeic" x="900.500" y="367"/><use href="#eyeic" x="900.500" y="378"/><use href="#eyeic" x="900.500" y="389"/>

<use href="#dwn" x="926.500" y="270"/><use href="#rgt" x="940" y="279"/><use href="#dwn" x="938.500" y="292"/><use href="#rgt" x="951.500" y="334"/><use href="#rgt" x="951.500" y="345"/><use href="#rgt" x="951.500" y="356"/><use href="#rgt" x="927" y="367"/><use href="#rgt" x="927" y="378"/><use href="#rgt" x="927" y="389"/>

<use href="#th" x="937" y="266.500"/><use href="#th" x="949.500" y="277.500"/><use href="#th" x="949.500" y="288.500"/><use href="#th" x="961" y="299.500"/><use href="#th" x="961" y="310.500"/><use href="#th" x="961" y="321.500"/><use href="#th" x="961" y="332.500"/><use href="#th" x="961" y="343.500"/><use href="#th" x="961" y="354.500"/><use href="#th" x="937" y="365.500"/><use href="#th" x="937" y="376.500"/><use href="#th" x="937" y="387.500"/>
<path d="M949.500 281.500H958M949.500 283H958" stroke="#555" stroke-width=".6"/>
<path d="M963 329 968 323" stroke="#777" stroke-width=".6"/>
<path d="M961 304H969M961 315H969M961 348H969" stroke="#bbb" stroke-width=".6"/>
<path d="M965 355V363M963 355V363M967 355V363" stroke="#ccc" stroke-width=".5"/>

<text x="949" y="274" class="l">背面</text>
<text x="961" y="285" class="l">摆头_复制</text>
<text x="961" y="296" class="l">裤腿_复制</text>
<text x="973" y="307" class="l">&lt;路径&gt;</text>
<text x="973" y="318" class="l">&lt;路径&gt;</text>
<text x="973" y="329" class="l">&lt;路径&gt;</text>
<text x="973" y="340" class="l">图层 9_复制</text>
<text x="973" y="351" class="l">图层 8_复制</text>
<text x="973" y="362" class="l">&lt;编组&gt;</text>
<text x="949" y="373" class="l">裤子</text>
<text x="949" y="384" class="l">参考线</text>
<text x="949" y="395" class="l">图层 1</text>

<use href="#tg" x="1060.500" y="268.500"/><use href="#tg" x="1060.500" y="279.500"/><use href="#tg" x="1060.500" y="290.500"/><use href="#tgf" x="1060.500" y="301.500"/><use href="#tgf" x="1060.500" y="312.500"/><use href="#tgf" x="1060.500" y="323.500"/><use href="#tg" x="1060.500" y="334.500"/><use href="#tg" x="1060.500" y="345.500"/><use href="#tg" x="1060.500" y="356.500"/><use href="#tg" x="1060.500" y="367.500"/><use href="#tg" x="1060.500" y="378.500"/><use href="#tg" x="1060.500" y="389.500"/>

<rect x="895" y="552" width="184" height="11" fill="#4a4a4a"/>
<text x="898" y="560" class="s" style="font-size:6.500px;fill:#b0b0b0">4 图层</text>
<path d="M991 556H994.500M990 556V562H996V559M994 558 997 555" fill="none" stroke="#aaa" stroke-width=".7"/>
<circle cx="1006" cy="557.500" r="1.800" fill="none" stroke="#666" stroke-width=".7"/><path d="M1004.500 559 1003 561.500" stroke="#666" stroke-width=".7"/>
<rect x="1017.500" y="555" width="5" height="5" fill="#aaa"/>
<path d="M1031 555.500H1037V560H1034Z" fill="#bbb"/>
<rect x="1045" y="555" width="6" height="6" fill="#ccc"/>
<rect x="1059.500" y="556" width="5" height="6" fill="#999"/><rect x="1059" y="554.500" width="6" height="1" fill="#999"/>

<rect x="870" y="50.500" width="1" height="513" fill="#3a3a3a"/>

<!-- dock -->
<rect x="38" y="563.500" width="1004" height="42" rx="9" fill="#e0e1e3"/>
<rect x="38.500" y="564" width="1003" height="41" rx="9" fill="none" stroke="#f2f2f2" stroke-width=".8"/>

<!-- finder -->
<rect x="44" y="570" width="27.500" height="27.500" rx="6" fill="url(#fnd)"/>
<path d="M58 570C56 578 55 583 55 586H58V597" fill="none" stroke="#1e3a60" stroke-width=".8"/>
<path d="M50 576V580M64 576V580" stroke="#1e3a60" stroke-width="1.400"/>
<path d="M49 587Q57 592 66 587" fill="none" stroke="#1e3a60" stroke-width="1.100"/>
<!-- launchpad -->
<rect x="80" y="570" width="27" height="27" rx="6" fill="#e9e9ec"/>
<g>
<rect x="84.500" y="575" width="5" height="5" rx="1" fill="#6cc040"/><rect x="91" y="575" width="5" height="5" rx="1" fill="#f0b020"/><rect x="97.500" y="575" width="5" height="5" rx="1" fill="#f08020"/>
<rect x="84.500" y="581" width="5" height="5" rx="1" fill="#e03838"/><rect x="91" y="581" width="5" height="5" rx="1" fill="#909498"/><rect x="97.500" y="581" width="5" height="5" rx="1" fill="#e83070"/>
<rect x="84.500" y="587" width="5" height="5" rx="1" fill="#8040d0"/><rect x="91" y="587" width="5" height="5" rx="1" fill="#3080f0"/><rect x="97.500" y="587" width="5" height="5" rx="1" fill="#30a0e0"/>
</g>
<!-- safari -->
<rect x="116" y="570" width="27" height="27" rx="6" fill="#eeeef0"/>
<circle cx="129.500" cy="583" r="11.500" fill="#4a90e4"/><circle cx="129.500" cy="583" r="11.500" fill="none" stroke="#fff" stroke-width=".8"/>
<path d="M137 575 131.500 585 127.500 581Z" fill="#e8413a"/><path d="M122 591 131.500 585 127.500 581Z" fill="#f2f2f2"/>
<!-- mail -->
<rect x="152" y="570" width="27" height="27" rx="6" fill="url(#blue)"/>
<rect x="156" y="576" width="19" height="14" rx="1" fill="#eef2f7"/><path d="M156 576 165.500 585 175 576M156 590 162 582M175 590 169 582" fill="none" stroke="#aab4c4" stroke-width=".8"/>
<!-- messages -->
<rect x="188" y="570" width="27" height="27" rx="6" fill="url(#grn)"/>
<ellipse cx="201.500" cy="582.500" rx="10" ry="8.500" fill="#f0f4ee"/><path d="M195 588 193 593 199 590Z" fill="#f0f4ee"/>
<!-- contacts -->
<rect x="224" y="570" width="27" height="27" rx="5" fill="#a98248"/>
<rect x="250" y="575" width="2" height="5" fill="#e8a040"/><rect x="250" y="581" width="2" height="5" fill="#50a8d0"/><rect x="250" y="587" width="2" height="5" fill="#70b850"/>
<circle cx="237" cy="583" r="8.500" fill="none" stroke="#7c5c30" stroke-width=".8"/><circle cx="237" cy="581" r="3" fill="#7c5c30"/><path d="M231 589Q237 583 243 589" fill="#7c5c30"/>
<!-- maps -->
<rect x="259.500" y="570" width="27" height="27" rx="5" fill="#b8e08c"/>
<path d="M259.500 570H275C283 575 283 590 286.500 590V597H280C280 585 270 578 259.500 578Z" fill="#f4e6a8"/>
<rect x="264" y="570" width="5" height="27" fill="#f8f8f8"/><rect x="269" y="570" width="1" height="27" fill="#3a88e8"/>
<circle cx="266" cy="587" r="3.400" fill="#1c6ae0" stroke="#fff"/>
<rect x="276" y="589" width="8" height="6" rx="1" fill="#3a78d0"/>
<!-- photos -->
<rect x="295.500" y="570" width="27" height="27" rx="6" fill="#f6f6f6"/>
<g opacity=".85">
<ellipse cx="309" cy="577" rx="3" ry="5.500" fill="#f2a23a"/><ellipse cx="314.500" cy="579" rx="3" ry="5.500" transform="rotate(45 314.500 579)" fill="#e8d23c"/><ellipse cx="316" cy="584" rx="5.500" ry="3" fill="#8cc84a"/><ellipse cx="314" cy="589" rx="3" ry="5.500" transform="rotate(-45 314 589)" fill="#4ab89a"/><ellipse cx="309" cy="591" rx="3" ry="5.500" fill="#4a8ad8"/><ellipse cx="304" cy="589" rx="3" ry="5.500" transform="rotate(45 304 589)" fill="#8a5ac8"/><ellipse cx="302" cy="584" rx="5.500" ry="3" fill="#c84a9a"/><ellipse cx="304" cy="579" rx="3" ry="5.500" transform="rotate(-45 304 579)" fill="#e04a4a"/>
</g>
<!-- facetime -->
<rect x="331" y="570" width="27" height="27" rx="6" fill="url(#grn)"/>
<rect x="336" y="577" width="13" height="12" rx="3" fill="#eef6ea"/><path d="M350 582 354 578.500V588L350 585Z" fill="#eef6ea"/>
<!-- calendar -->
<rect x="367" y="570" width="27" height="27" rx="6" fill="#f4f4f4"/>
<path d="M367 576C367 572 369 570 373 570H388C392 570 394 572 394 576V579H367Z" fill="#e2574c"/>
<text x="380.500" y="577" text-anchor="middle" style="font-size:6px;fill:#fff">7月</text>
<text x="380.500" y="594" text-anchor="middle" style="font-size:16px;fill:#333">31</text>
<!-- reminders -->
<rect x="403" y="570" width="27" height="27" rx="6" fill="#f5f5f5"/>
<circle cx="409" cy="577" r="2" fill="#3a80e8"/><circle cx="409" cy="584" r="2" fill="#e8503a"/><circle cx="409" cy="591" r="2" fill="#f0a030"/>
<path d="M413 577H426M413 584H426M413 591H426" stroke="#c4c4c4" stroke-width=".8"/>
<!-- notes -->
<rect x="439" y="570" width="27" height="27" rx="6" fill="#eeebe2"/>
<path d="M439 578V576C439 572 441 570 445 570H460C464 570 466 572 466 576V578Z" fill="#fbd24a"/>
<path d="M441 584H464M441 590H464" stroke="#ddd9ce" stroke-width=".7"/>
<!-- tv -->
<rect x="475" y="570" width="27" height="27" rx="6" fill="#131313"/>
<text x="491" y="588" text-anchor="middle" style="font-size:11px;fill:#eee;font-weight:bold">tv</text>
<path d="M481.500 578.500C480 578.500 479 580 479.500 582 480 584 481 586 482 586 482.700 586 483 585.600 483.500 585.600 484 585.600 484.300 586 485 586 485.500 586 486 585.300 486.200 584.500 485 584 485 582 486 581.500 485.300 580.500 484 580.500 483.500 580.800 483 580.900 482.500 580.500 481.500 580.500" fill="#eee"/>
<!-- music -->
<rect x="511" y="570" width="27" height="27" rx="6" fill="url(#mus)"/>
<path d="M520 577 531 575V588" fill="none" stroke="#fff" stroke-width="1.800"/><path d="M520 577V590" stroke="#fff" stroke-width="1.800"/><ellipse cx="518" cy="590.500" rx="2.800" ry="2.300" fill="#fff"/><ellipse cx="529" cy="588.500" rx="2.800" ry="2.300" fill="#fff"/>
<!-- podcasts -->
<rect x="546" y="570" width="27" height="27" rx="6" fill="url(#pod)"/>
<circle cx="559.500" cy="582" r="8.500" fill="none" stroke="#f2dcf8" stroke-width="1.100"/><circle cx="559.500" cy="582" r="5" fill="none" stroke="#f2dcf8" stroke-width="1.100"/><circle cx="559.500" cy="581" r="2.200" fill="#fff"/><rect x="558" y="584" width="3" height="8" rx="1.500" fill="#fff"/>
<!-- app store -->
<rect x="582" y="570" width="27" height="27" rx="6" fill="url(#stor)"/>
<path d="M598 574 588.500 591M592 574 601.500 591M586 587H604" stroke="#fff" stroke-width="1.700" fill="none"/>
<!-- system prefs -->
<rect x="618" y="570" width="27" height="27" rx="6" fill="#9a9a9a"/>
<circle cx="631.500" cy="583" r="11" fill="#3e3e3e"/><circle cx="631.500" cy="583" r="7" fill="none" stroke="#9a9a9a" stroke-width="1.200"/><path d="M631.500 583V576M631.500 583 625.500 587M631.500 583 637.500 587" stroke="#9a9a9a" stroke-width="1.500"/>
<circle cx="643" cy="573.500" r="6" fill="#e2504a"/><text x="643" y="576" text-anchor="middle" style="font-size:7px;fill:#fff">2</text>
<!-- paper plane -->
<circle cx="667" cy="583.500" r="14" fill="url(#pg)"/>
<path d="M657 584 677 575 670 593 666 587 663 590V586Z" fill="#f4f8ee"/>
<rect x="694" y="570" width=".8" height="27" fill="#c0c0c0"/>
<!-- baidu -->
<rect x="705.500" y="570" width="27" height="27" rx="6" fill="#f6f6f8"/>
<circle cx="719" cy="577" r="4.500" fill="none" stroke="#e84c4c" stroke-width="2"/>
<circle cx="713" cy="586" r="4.800" fill="none" stroke="#3a90e8" stroke-width="2"/><circle cx="725" cy="586" r="4.800" fill="none" stroke="#3a90e8" stroke-width="2"/>
<rect x="714" y="594" width="5" height="2" fill="#e84c4c"/><rect x="719" y="594" width="5" height="2" fill="#4a80e8"/>
<!-- ai -->
<rect x="740" y="568" width="30.500" height="31" fill="#2a1700" stroke="#d98a34" stroke-width="1.500"/>
<text x="755" y="590" text-anchor="middle" style="font-size:18px;fill:#f09a38">Ai</text>
<!-- ps -->
<rect x="775.500" y="567.500" width="31" height="32" rx="3" fill="#001e36"/>
<text x="791" y="590" text-anchor="middle" style="font-size:18px;fill:#4ea4f5;font-weight:bold">Ps</text>
<!-- chrome -->
<rect x="813.500" y="570" width="27" height="27" rx="6" fill="#f4f4f4"/>
<circle cx="827" cy="583.500" r="12" fill="#3eaa55"/>
<path d="M827 571.500A12 12 0 0 1 837.400 577.500L827 583.500 816.600 577.500A12 12 0 0 1 827 571.500Z" fill="#e34234"/>
<path d="M837.400 577.500A12 12 0 0 1 827 595.500L832 583.500Z" fill="#f2c032"/>
<circle cx="827" cy="583.500" r="5.700" fill="#fff"/><circle cx="827" cy="583.500" r="4.400" fill="#4a86e8"/>
<!-- wps -->
<rect x="849.500" y="570" width="27" height="27" rx="6" fill="#f6f6f6"/>
<path d="M853.500 576.500 858.500 590 863 580 867.500 590 872.500 576.500" fill="none" stroke="#d9322c" stroke-width="3.200" stroke-linejoin="miter"/>
<!-- wechat -->
<rect x="885.500" y="570" width="27" height="27" rx="6" fill="#6bd67a"/>
<ellipse cx="896" cy="580" rx="7.500" ry="6" fill="#fff"/><ellipse cx="903.500" cy="586" rx="6.500" ry="5.200" fill="#fff" stroke="#6bd67a" stroke-width=".6"/>
<circle cx="893.500" cy="578.500" r=".9" fill="#6bd67a"/><circle cx="898.500" cy="578.500" r=".9" fill="#6bd67a"/><circle cx="901.500" cy="585" r=".8" fill="#6bd67a"/><circle cx="905.500" cy="585" r=".8" fill="#6bd67a"/>
<rect x="925" y="570" width=".8" height="27" fill="#c0c0c0"/>
<!-- question -->
<path d="M944 577C944 568 959 568 959 577 959 583 951.500 583 951.500 589" fill="none" stroke="#f4f4f4" stroke-width="2.600"/><path d="M944 577C944 568 959 568 959 577 959 583 951.500 583 951.500 589" fill="none" stroke="#c8c8c8" stroke-width=".5"/>
<circle cx="951.500" cy="594" r="2" fill="#eee"/>
<!-- document -->
<rect x="971" y="576" width="32" height="21" fill="#f8f8f8"/>
<path d="M974 578.500H984" stroke="#e09090" stroke-width=".8"/>
<path d="M983 582H991M985 585H989M983 588H991" stroke="#888" stroke-width=".9"/>
<rect x="992" y="591" width="10" height="9" fill="#fff"/>
<path d="M993.500 592.500 995.500 598 997 594.500 998.500 598 1000.500 592.500" fill="none" stroke="#d9322c" stroke-width="1.200"/>
<!-- trash -->
<path d="M1012 570H1035L1032 598Q1023.500 601 1015 598Z" fill="#e8e8e8" stroke="#c4c4c4" stroke-width=".6"/>
<ellipse cx="1023.500" cy="570.500" rx="11.500" ry="3" fill="#d4d4d4" stroke="#b0b0b0" stroke-width=".5"/>
<path d="M1016 569H1020M1022 570H1026M1028 569H1032" stroke="#555" stroke-width="1.300"/>
<path d="M1018 576 1019 596M1023.500 576V597M1029 576 1028 596" stroke="#cfcfcf" stroke-width=".8"/>

<!-- dock indicators -->
<g fill="#444"><circle cx="57.500" cy="603" r=".8"/><circle cx="719" cy="603" r=".8"/><circle cx="755" cy="603" r=".8"/><circle cx="791" cy="603" r=".8"/><circle cx="827" cy="603" r=".8"/><circle cx="863" cy="603" r=".8"/><circle cx="899" cy="603" r=".8"/></g>
</svg>
</body>
</html>
